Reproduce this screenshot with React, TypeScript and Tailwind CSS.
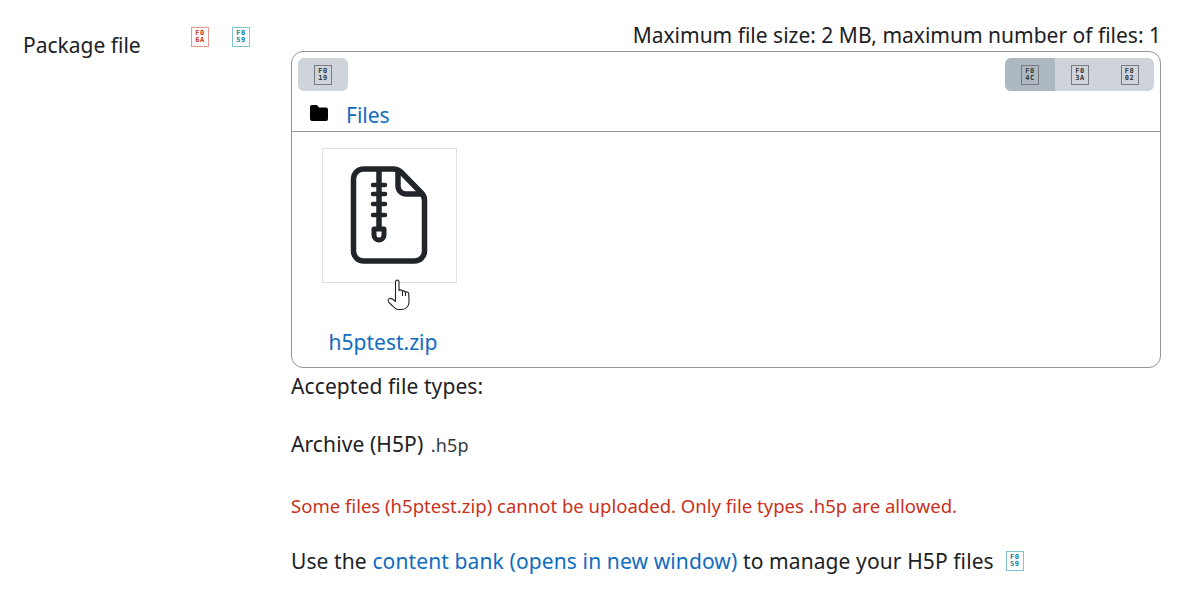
const Tofu = ({ a, b, box, ink }: { a: string; b: string; box: string; ink: string }) => (
  <span className={`inline-flex h-5 w-[18px] shrink-0 flex-col items-center justify-center border-[1.5px] font-['DejaVu_Sans_Mono',monospace] text-[7px] leading-[7px] font-bold tracking-[0.5px] ${box} ${ink}`}>
    <span>{a}</span>
    <span>{b}</span>
  </span>
);

const grayBox = "border-[#777b80]";
const grayInk = "text-[#33383d]";

const ZipIcon = () => (
  <svg width="135" height="135" viewBox="0 0 135 135" fill="none" stroke="#212529" strokeWidth="5.5">
    <path d="M41.500 21H71Q76 21 79 24L99.500 45Q102.500 48 102.500 52V103A10 10 0 0 1 92.500 113H41.500A10 10 0 0 1 31.500 103V31A10 10 0 0 1 41.500 21Z" />
    <path d="M76 23V38A8 8 0 0 0 84 46H100" />
    <path d="M57 22V80" />
    <path d="M51 37H63M51 46H63M51 56H63M51 67H63" strokeWidth="4.5" strokeLinecap="round" />
    <path d="M52 81H62V87A5 5 0 0 1 52 87Z" strokeWidth="5" strokeLinejoin="round" />
  </svg>
);

const HandCursor = () => (
  <svg width="24" height="32" viewBox="0 0 24 32" fill="#fff" stroke="#222" strokeWidth="1.1" strokeLinejoin="round">
    <path d="M8.500 3C8.500 0.500 12 0.500 12 3V11.500C12.500 10.500 15 10.500 15.500 12.500C16 11.500 18 11.500 18.500 13.500C19 12.500 21.500 12.500 21.800 15L22 23C22 27 19 30.500 15 30.500H11C8 30.500 6 27 3 24.500C0.500 22.500 0.500 20 2.500 19.500C4.500 19 6.500 20.500 8.500 22.500Z" />
    <path d="M15.500 12.500V17M18.500 13.500V17" />
  </svg>
);

export default function App() {
  return (
    <div className="flex h-[592px] w-[1201px] overflow-hidden bg-white font-['Noto_Sans','Open_Sans',sans-serif] text-[#1d2125]">
      {/* Label column */}
      <div className="flex w-[291px] shrink-0 items-start pt-[27px] pl-[23px]">
        <span className="w-[168px] text-[21px] leading-[36px]">Package file</span>
        <Tofu a="F0" b="6A" box="border-[#e89a90]" ink="text-[#ca3120]" />
        <span className="w-[23px]" />
        <Tofu a="F0" b="59" box="border-[#7fc5d0]" ink="text-[#0f7c8f]" />
      </div>

      {/* Field column */}
      <div className="w-[870px] pt-4">
        <p className="h-[35px] text-right text-[21px] leading-[38px]">Maximum file size: 2 MB, maximum number of files: 1</p>

        <div className="h-[317px] rounded-[12px] border border-[#8f959e]">
          <div className="flex items-start justify-between px-[6px] pt-[6px]">
            <div className="flex h-[33px] w-[50px] items-center justify-center rounded-[6px] bg-[#ced4da]">
              <Tofu a="F0" b="19" box={grayBox} ink={grayInk} />
            </div>
            <div className="flex h-[33px] w-[149px] overflow-hidden rounded-[6px] bg-[#ced4da]">
              <div className="flex w-[50px] items-center justify-center bg-[#aeb8c0]">
                <Tofu a="F8" b="4C" box={grayBox} ink={grayInk} />
              </div>
              <div className="flex w-[50px] items-center justify-center">
                <Tofu a="F0" b="3A" box={grayBox} ink={grayInk} />
              </div>
              <div className="flex w-[49px] items-center justify-center">
                <Tofu a="F8" b="02" box={grayBox} ink={grayInk} />
              </div>
            </div>
          </div>

          <div className="flex h-[41px] items-center border-b border-[#8f959e] pl-[18px]">
            <svg width="18" height="16" viewBox="0 0 18 16" className="mt-[4px]">
              <path d="M2 0H7L9 2.500H16A2 2 0 0 1 18 4.500V14A2 2 0 0 1 16 16H2A2 2 0 0 1 0 14V2A2 2 0 0 1 2 0Z" fill="#000" />
            </svg>
            <a className="mt-[9px] ml-[18px] text-[21px] text-[#0f6cbf]">Files</a>
          </div>

          <div className="pt-4 pl-[30px]">
            <div className="relative h-[135px] w-[135px] border border-[#dee2e6]">
              <div className="-m-px">
                <ZipIcon />
              </div>
              <div className="absolute top-[130px] left-[64px]">
                <HandCursor />
              </div>
            </div>
            <a className="mt-[40px] block w-[122px] text-center text-[21px] leading-[38px] text-[#0f6cbf]">h5ptest.zip</a>
          </div>
        </div>

        <p className="mt-[1px] text-[21px] leading-[34px] tracking-[0.1px]">Accepted file types:</p>
        <p className="mt-[24px] text-[21px] leading-[34px] tracking-[0.1px]">
          Archive (H5P) <span className="ml-[2px] text-[18px] text-[#343a40]">.h5p</span>
        </p>
        <p className="mt-[29px] text-[18.550px] leading-[30px] text-[#ca3120]">Some files (h5ptest.zip) cannot be uploaded. Only file types .h5p are allowed.</p>
        <div className="mt-[23px] flex items-center text-[21px] leading-[34px] tracking-[0.1px]">
          <span className="whitespace-pre">Use the </span>
          <a className="tracking-[0.12px] text-[#0f6cbf]">content bank (opens in new window)</a>
          <span className="whitespace-pre"> to manage your H5P files</span>
          <span className="ml-[12px] flex">
            <Tofu a="F0" b="59" box="border-[#7fc5d0]" ink="text-[#0f7c8f]" />
          </span>
        </div>
      </div>
    </div>
  );
}
